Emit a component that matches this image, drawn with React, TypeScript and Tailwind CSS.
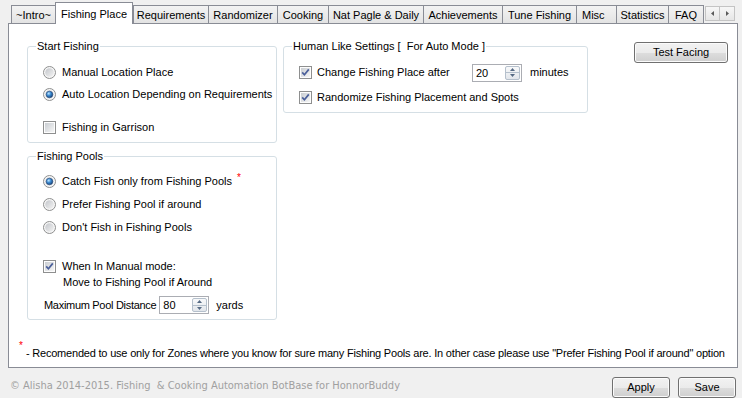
import React from "react";

const Check = ({ checked }: { checked?: boolean }) => (
  <svg width="13" height="13" viewBox="0 0 13 13" className="shrink-0">
    <defs>
      <linearGradient id="cbg" x1="0" y1="0" x2="1" y2="1">
        <stop offset="0" stopColor="#c9cdd2" />
        <stop offset="1" stopColor="#f6f6f6" />
      </linearGradient>
    </defs>
    <rect x="0.5" y="0.5" width="12" height="12" fill="#fdfdfd" stroke="#8e8f8f" />
    <rect x="2" y="2" width="9" height="9" fill="url(#cbg)" />
    {checked && (
      <path d="M3.2 6.4 L5.4 8.8 L9.8 3.4" fill="none" stroke="#4a5f9a" strokeWidth="1.7" />
    )}
  </svg>
);

const Radio = ({ checked }: { checked?: boolean }) => (
  <svg width="13" height="13" viewBox="0 0 13 13" className="shrink-0">
    <defs>
      <linearGradient id="rbg" x1="0" y1="0" x2="1" y2="1">
        <stop offset="0" stopColor="#c3c6cb" />
        <stop offset="1" stopColor="#f3f3f3" />
      </linearGradient>
      <radialGradient id="rsel" cx="0.38" cy="0.35" r="0.7">
        <stop offset="0" stopColor="#bfe6ff" />
        <stop offset="0.45" stopColor="#3c8bd2" />
        <stop offset="1" stopColor="#163e70" />
      </radialGradient>
    </defs>
    <circle cx="6.5" cy="6.5" r="6" fill="#f6f6f6" stroke="#8e8f8f" />
    <circle cx="6.5" cy="6.5" r="4.3" fill="url(#rbg)" />
    {checked && <circle cx="6.5" cy="6.5" r="3.3" fill="url(#rsel)" stroke="#23487a" strokeWidth="0.6" />}
  </svg>
);

const Spin = ({ value }: { value: string }) => (
  <div className="flex h-[18px] w-[50px] shrink-0 border border-[#abadb3] bg-white">
    <span className="flex-1 pl-[3px] leading-[16px]">{value}</span>
    <div className="m-px flex w-[15px] flex-col rounded-[2px] border border-[#b5c0cc] bg-[linear-gradient(to_bottom,#f8f9fa,#e2e6eb)]">
      <div className="flex flex-1 items-center justify-center border-b border-[#b5c0cc]">
        <svg width="5" height="3" viewBox="0 0 5 3">
          <path d="M0 3 L2.5 0 L5 3Z" fill="#566a84" />
        </svg>
      </div>
      <div className="flex flex-1 items-center justify-center">
        <svg width="5" height="3" viewBox="0 0 5 3">
          <path d="M0 0 L2.5 3 L5 0Z" fill="#566a84" />
        </svg>
      </div>
    </div>
  </div>
);

const WinButton = ({ label, w }: { label: string; w: string }) => (
  <div
    className={`${w} flex h-[21px] items-center justify-center rounded-[3px] border border-[#707070] bg-[linear-gradient(to_bottom,#f2f2f2_0%,#ebebeb_50%,#dddddd_51%,#cfcfcf_100%)] shadow-[inset_0_0_0_1px_#fbfbfb]`}
  >
    {label}
  </div>
);

const tabs: { t: string; w: string; sel?: boolean }[] = [
  { t: "~Intro~", w: "w-[44px]" },
  { t: "Fishing Place", w: "w-[78px]", sel: true },
  { t: "Requirements", w: "w-[75px]" },
  { t: "Randomizer", w: "w-[69px]" },
  { t: "Cooking", w: "w-[51px]" },
  { t: "Nat Pagle & Daily", w: "w-[95px]" },
  { t: "Achievements", w: "w-[79px]" },
  { t: "Tune Fishing", w: "w-[74px]" },
  { t: "Misc", w: "w-[40px]" },
  { t: "Statistics", w: "w-[52px]" },
  { t: "FAQ", w: "w-[36px]" },
];

export default function App() {
  return (
    <div className="flex h-[398px] w-[742px] flex-col overflow-hidden bg-[#f0f0f0] font-['Liberation_Sans',Arial,sans-serif] text-[11px] text-black">
      {/* tab strip */}
      <div className="flex h-[23px] items-end pl-[11px]">
        {tabs.map((tb, i) =>
          tb.sel ? (
            <div
              key={i}
              className={`${tb.w} relative z-10 -mb-px flex h-[22px] items-start justify-center border-x border-t border-[#898c95] bg-white pt-[3px]`}
            >
              {tb.t}
            </div>
          ) : (
            <div
              key={i}
              className={`${tb.w} flex h-[18px] items-center justify-center whitespace-nowrap border-t border-l border-[#898c95] bg-[linear-gradient(to_bottom,#f3f3f3,#e3e3e3)] pt-px ${
                i === tabs.length - 1 ? "border-r" : ""
              } ${tb.t === "Misc" ? "justify-start pl-[5px]" : ""}`}
            >
              {tb.t}
            </div>
          )
        )}
        <div className="mb-[2px] ml-px flex h-[15px]">
          <div className="flex w-[15px] items-center justify-center border border-[#c4c4c4] bg-[linear-gradient(to_bottom,#f7f7f7,#e6e6e6)]">
            <svg width="3" height="5" viewBox="0 0 3 5">
              <path d="M3 0 L0 2.5 L3 5Z" fill="#5a5a5a" />
            </svg>
          </div>
          <div className="flex w-[15px] items-center justify-center border border-l-0 border-[#c4c4c4] bg-[linear-gradient(to_bottom,#f7f7f7,#e6e6e6)]">
            <svg width="3" height="5" viewBox="0 0 3 5">
              <path d="M0 0 L3 2.5 L0 5Z" fill="#5a5a5a" />
            </svg>
          </div>
        </div>
      </div>

      {/* panel */}
      <div className="ml-[8px] mr-[4px] flex h-[345px] flex-col border border-[#898c95] bg-white">
        <div className="flex pl-[18px] pt-[16px]">
          {/* left column */}
          <div className="flex w-[250px] flex-col">
            <fieldset className="w-[250px] rounded-[3px] border border-[#d5dfe5] p-0">
              <legend className="ml-[8px] px-px leading-[13px]">Start Fishing</legend>
              <div className="flex flex-col pb-[7px] pl-[15px] pt-[11px]">
                <div className="flex h-[16px] items-center gap-[6px]">
                  <Radio />
                  <span>Manual Location Place</span>
                </div>
                <div className="mt-[6px] flex h-[16px] items-center gap-[6px]">
                  <Radio checked />
                  <span>Auto Location Depending on Requirements</span>
                </div>
                <div className="mt-[17px] flex h-[16px] items-center gap-[6px]">
                  <Check />
                  <span>Fishing in Garrison</span>
                </div>
              </div>
            </fieldset>

            <fieldset className="mt-[7px] w-[250px] rounded-[3px] border border-[#d5dfe5] p-0">
              <legend className="ml-[8px] px-px leading-[13px]">Fishing Pools</legend>
              <div className="flex flex-col pb-[5px] pl-[15px] pt-[10px]">
                <div className="flex h-[16px] items-center gap-[6px]">
                  <Radio checked />
                  <span>Catch Fish only from Fishing Pools</span>
                  <span className="-mt-[8px] ml-[-1px] text-[10px] text-[#ff0000]">*</span>
                </div>
                <div className="mt-[7px] flex h-[16px] items-center gap-[6px]">
                  <Radio />
                  <span>Prefer Fishing Pool if around</span>
                </div>
                <div className="mt-[7px] flex h-[16px] items-center gap-[6px]">
                  <Radio />
                  <span>Don't Fish in Fishing Pools</span>
                </div>
                <div className="mt-[23px] flex items-start gap-[6px]">
                  <div className="flex h-[16px] items-center">
                    <Check checked />
                  </div>
                  <div className="flex flex-col leading-[16px]">
                    <span>When In Manual mode:</span>
                    <span className="pl-px">Move to Fishing Pool if Around</span>
                  </div>
                </div>
                <div className="mt-[6px] flex h-[18px] items-center">
                  <span className="ml-px mr-[3px] whitespace-nowrap tracking-[-0.3px]">Maximum Pool Distance</span>
                  <Spin value="80" />
                  <span className="ml-[7px]">yards</span>
                </div>
              </div>
            </fieldset>
          </div>

          {/* human like */}
          <fieldset className="ml-[6px] h-[73px] w-[305px] rounded-[3px] border border-[#d5dfe5] p-0">
            <legend className="ml-[8px] px-px leading-[13px]">Human Like Settings [&nbsp; For Auto Mode ]</legend>
            <div className="flex flex-col pl-[15px] pt-[11px]">
              <div className="flex h-[17px] items-center">
                <div className="flex w-[173px] items-center gap-[5px]">
                  <Check checked />
                  <span>Change Fishing Place after</span>
                </div>
                <Spin value="20" />
                <span className="ml-[8px]">minutes</span>
              </div>
              <div className="mt-[8px] flex h-[16px] items-center gap-[5px]">
                <Check checked />
                <span>Randomize Fishing Placement and Spots</span>
              </div>
            </div>
          </fieldset>

          <div className="ml-auto mr-[9px] mt-[2px]">
            <WinButton label="Test Facing" w="w-[94px]" />
          </div>
        </div>

        <div className="mt-auto flex items-start pb-[7px] pl-[10px]">
          <span className="-mt-[4px] text-[10px] leading-[10px] text-[#ff0000]">*</span>
          <span className="ml-[3px] mt-px whitespace-nowrap text-[11px] leading-[14px] tracking-[-0.2px]">
            - Recomended to use only for Zones where you know for sure many Fishing Pools are. In other case please use "Prefer Fishing Pool if around" option
          </span>
        </div>
      </div>

      {/* footer */}
      <div className="flex flex-1 items-start pl-[10px] pr-[6px] pt-[9px]">
        <span className="mt-[2px] font-['DejaVu_Sans_Condensed','Liberation_Sans_Narrow','Liberation_Sans',sans-serif] text-[11px] leading-[14px] text-[#a0a0a0]">
          © Alisha 2014-2015. Fishing&nbsp; &amp; Cooking Automation BotBase for HonnorBuddy
        </span>
        <div className="ml-auto flex gap-[8px]">
          <WinButton label="Apply" w="w-[58px]" />
          <WinButton label="Save" w="w-[58px]" />
        </div>
      </div>
    </div>
  );
}
